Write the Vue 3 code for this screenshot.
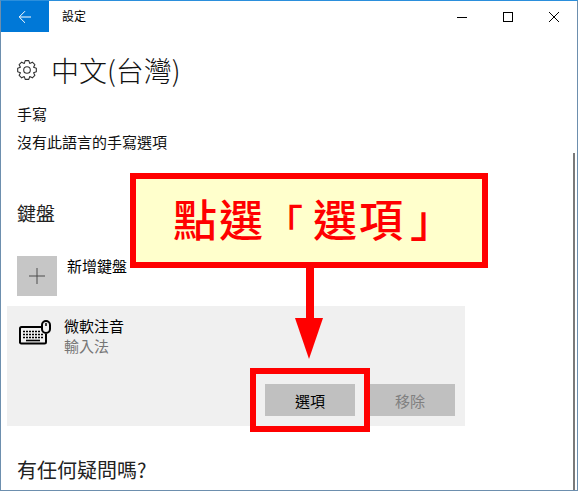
<template>
  <div class="window">
    <!-- Barra de título -->
    <header class="titlebar">
      <button class="back">
        <svg viewBox="0 0 14 14" width="14" height="14" fill="none" stroke="#fff" stroke-width="1">
          <path d="M13 7H1.5M7 1.2 1.2 7 7 12.8" />
        </svg>
      </button>
      <span class="app-name">設定</span>
      <div class="controls">
        <svg viewBox="0 0 46 32" width="46" height="32"><path d="M18 16.500h10" stroke="#000" fill="none" /></svg>
        <svg viewBox="0 0 46 32" width="46" height="32"><rect x="18.500" y="11.500" width="9" height="9" stroke="#000" fill="none" /></svg>
        <svg viewBox="0 0 46 32" width="46" height="32"><path d="M18 11l10 10M28 11 18 21" stroke="#000" fill="none" /></svg>
      </div>
    </header>

    <main class="content">
      <div class="heading">
        <svg class="gear" viewBox="0 0 20 20" width="20" height="20" fill="none" stroke="#333" stroke-width="1.100">
          <circle cx="10" cy="10" r="3.300" />
          <path :d="gearPath" stroke-linejoin="round" />
        </svg>
        <h1>中文(台灣)</h1>
      </div>

      <p class="line first">手寫</p>
      <p class="line second">沒有此語言的手寫選項</p>

      <h2 class="section">鍵盤</h2>

      <div class="add-row">
        <div class="plus-tile">
          <svg viewBox="0 0 16 16" width="16" height="16" fill="none" stroke="#4c4c4c">
            <path d="M8 0v16M0 8h16" />
          </svg>
        </div>
        <span class="add-label">新增鍵盤</span>
      </div>

      <div class="panel">
        <div class="panel-top">
          <svg class="kbd" viewBox="0 0 32 25" width="32" height="25" fill="none" stroke="#000">
            <path d="M24 7H2.500A1.500 1.500 0 0 0 1 8.500v13A1.500 1.500 0 0 0 2.500 23.500h23A1.500 1.500 0 0 0 27 22v-8" stroke-width="2" />
            <rect x="23" y="1" width="8" height="12" rx="4" stroke-width="2" fill="#f0f0f0" />
            <path d="M27 3v3" stroke-width="1.500" />
            <path d="M4 11.500h18M4 14.500h20M4 17.500h20" stroke-width="1.600" stroke-dasharray="2 1" />
            <path d="M7 20.500h14" stroke-width="1.600" />
          </svg>
          <div>
            <div class="ime-name">微軟注音</div>
            <div class="ime-type">輸入法</div>
          </div>
        </div>
        <div class="panel-actions">
          <button class="btn">選項</button>
          <button class="btn disabled">移除</button>
        </div>
      </div>

      <h2 class="section help">有任何疑問嗎?</h2>
    </main>

    <div class="scroll-thumb"></div>

    <!-- Anotaciones sobre la captura -->
    <div class="callout">點選<span class="open">「</span> 選項<span class="close">」</span></div>
    <div class="arrow-shaft"></div>
    <div class="arrow-head"></div>
    <div class="highlight"></div>
  </div>
</template>

<script setup>
// contorno del engranaje: 8 dientes alrededor del centro
const teeth = 8
const pts = []
for (let i = 0; i < teeth; i++) {
  const a = (i / teeth) * Math.PI * 2 - Math.PI / 2
  const step = (Math.PI * 2) / teeth
  const ring = [
    [-0.5, 7.1],
    [-0.24, 9.5],
    [0.24, 9.5],
    [0.5, 7.1]
  ]
  for (const [off, r] of ring) {
    const t = a + off * step
    pts.push((10 + r * Math.cos(t)).toFixed(2) + ' ' + (10 + r * Math.sin(t)).toFixed(2))
  }
}
const gearPath = 'M' + pts.join('L') + 'Z'
</script>

<style>
html, body {
  margin: 0;
  background: #fff;
}
</style>

<style scoped>
.window {
  position: relative;
  width: 578px;
  height: 491px;
  box-sizing: border-box;
  overflow: hidden;
  background: #fff;
  border: 1px solid #6d8fae;
  border-top-color: #2b8fdc;
  font-family: "Noto Sans CJK TC", "Noto Sans", sans-serif;
  color: #000;
}

.titlebar {
  display: flex;
  align-items: center;
  height: 31px;
}

.back {
  width: 48px;
  height: 31px;
  border: 0;
  padding: 0;
  background: #0078d7;
  display: flex;
  align-items: center;
  justify-content: center;
}

.app-name {
  margin-left: 13px;
  font-size: 12px;
  line-height: 29px;
  align-self: flex-start;
}

.controls {
  margin-left: auto;
  display: flex;
}

.content {
  padding: 0 0 0 16px;
}

.heading {
  display: flex;
  align-items: center;
  height: 40px;
  margin-top: 18px;
}

.gear {
  flex-shrink: 0;
}

.heading h1 {
  margin: 0 0 0 14px;
  font-size: 28px;
  font-weight: 300;
  line-height: 40px;
  color: #111;
}

.line {
  margin: 0;
  font-size: 15px;
  line-height: 20px;
  color: #111;
}

.first {
  margin-top: 14px;
}

.second {
  margin-top: 8px;
}

.section {
  margin: 0;
  font-size: 19px;
  font-weight: 400;
  line-height: 28px;
  color: #222;
}

.content > .section:not(.help) {
  margin-top: 47px;
}

.add-row {
  display: flex;
  margin-top: 29px;
}

.plus-tile {
  width: 40px;
  height: 40px;
  background: #c6c6c6;
  display: flex;
  align-items: center;
  justify-content: center;
}

.add-label {
  margin-left: 10px;
  font-size: 15px;
  line-height: 20px;
}

.panel {
  width: 458px;
  height: 120px;
  box-sizing: border-box;
  margin: 10px 0 0 -10px;
  background: #f0f0f0;
  display: flex;
  flex-direction: column;
}

.panel-top {
  display: flex;
  padding: 10px 0 0 12px;
}

.kbd {
  margin: 4px 13px 0 0;
}

.ime-name,
.ime-type {
  font-size: 15px;
  line-height: 20px;
}

.ime-type {
  color: #767676;
}

.panel-actions {
  margin-top: auto;
  padding: 0 10px 10px 0;
  display: flex;
  justify-content: flex-end;
  gap: 10px;
}

.btn {
  width: 90px;
  height: 32px;
  border: 0;
  padding: 0;
  background: #c0c0c0;
  font-family: inherit;
  font-size: 15px;
  color: #000;
}

.btn.disabled {
  color: #808080;
}

.help {
  font-size: 20px;
  margin-top: 30px;
}

.scroll-thumb {
  position: absolute;
  left: 572px;
  top: 152px;
  bottom: 0;
  width: 2px;
  background: #7a7a7a;
}

.callout {
  position: absolute;
  left: 129px;
  top: 172px;
  width: 358px;
  height: 95px;
  box-sizing: border-box;
  border: 6px solid #f00;
  background: #ffc;
  color: #f00;
  font-size: 44px;
  font-weight: 500;
  letter-spacing: 2px;
  word-spacing: -4px;
  line-height: 78px;
  padding-left: 37px;
  white-space: nowrap;
}

.open {
  font-size: 38px;
}

.close {
  margin-left: 5px;
}

.arrow-shaft {
  position: absolute;
  left: 305px;
  top: 267px;
  width: 8px;
  height: 52px;
  background: #f00;
}

.arrow-head {
  position: absolute;
  left: 294px;
  top: 317px;
  width: 28px;
  height: 41px;
  background: #f00;
  clip-path: polygon(0 0, 100% 0, 50% 100%);
}

.highlight {
  position: absolute;
  left: 249px;
  top: 367px;
  width: 120px;
  height: 64px;
  box-sizing: border-box;
  border: 6px solid #f00;
}
</style>
